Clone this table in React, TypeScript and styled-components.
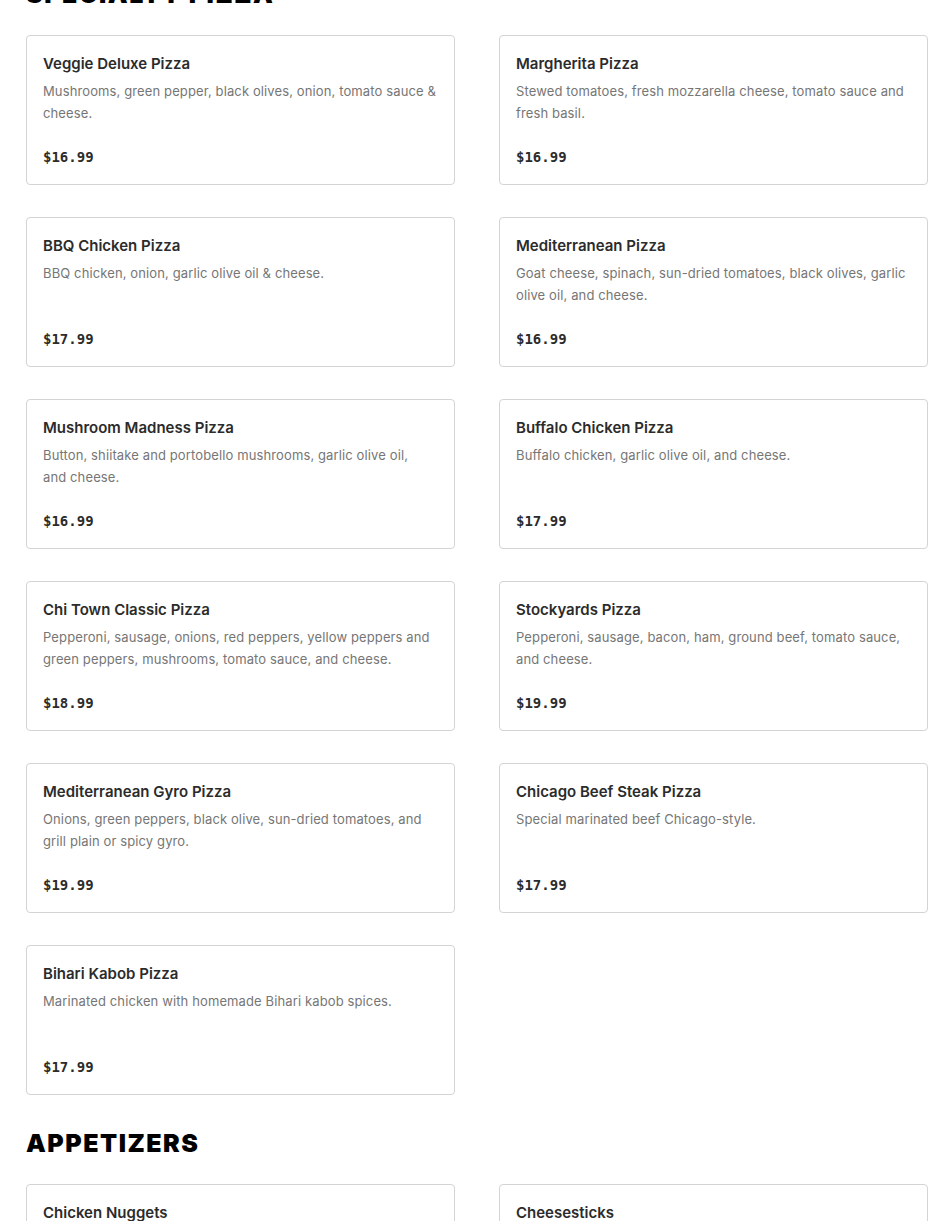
import styled, { createGlobalStyle } from "styled-components";

interface IMenuItem {
  name: string;
  description: string;
  price: string;
}

interface IMenuSection {
  title: string;
  items: IMenuItem[];
}

const sections: IMenuSection[] = [
  {
    title: "Specialty Pizza",
    items: [
      {
        name: "Veggie Deluxe Pizza",
        description:
          "Mushrooms, green pepper, black olives, onion, tomato sauce & cheese.",
        price: "$16.99",
      },
      {
        name: "Margherita Pizza",
        description:
          "Stewed tomatoes, fresh mozzarella cheese, tomato sauce and fresh basil.",
        price: "$16.99",
      },
      {
        name: "BBQ Chicken Pizza",
        description: "BBQ chicken, onion, garlic olive oil & cheese.",
        price: "$17.99",
      },
      {
        name: "Mediterranean Pizza",
        description:
          "Goat cheese, spinach, sun-dried tomatoes, black olives, garlic olive oil, and cheese.",
        price: "$16.99",
      },
      {
        name: "Mushroom Madness Pizza",
        // keep "and cheese." together so it wraps like the original
        description:
          "Button, shiitake and portobello mushrooms, garlic olive oil, and\u00a0cheese.",
        price: "$16.99",
      },
      {
        name: "Buffalo Chicken Pizza",
        description: "Buffalo chicken, garlic olive oil, and cheese.",
        price: "$17.99",
      },
      {
        name: "Chi Town Classic Pizza",
        description:
          "Pepperoni, sausage, onions, red peppers, yellow peppers and green peppers, mushrooms, tomato sauce, and cheese.",
        price: "$18.99",
      },
      {
        name: "Stockyards Pizza",
        description:
          "Pepperoni, sausage, bacon, ham, ground beef, tomato sauce, and cheese.",
        price: "$19.99",
      },
      {
        name: "Mediterranean Gyro Pizza",
        description:
          "Onions, green peppers, black olive, sun-dried tomatoes, and grill plain or spicy gyro.",
        price: "$19.99",
      },
      {
        name: "Chicago Beef Steak Pizza",
        description: "Special marinated beef Chicago-style.",
        price: "$17.99",
      },
      {
        name: "Bihari Kabob Pizza",
        description: "Marinated chicken with homemade Bihari kabob spices.",
        price: "$17.99",
      },
    ],
  },
  {
    title: "Appetizers",
    items: [
      {
        name: "Chicken Nuggets",
        description: "Crispy breaded chicken nuggets served with a dipping sauce.",
        price: "$7.99",
      },
      {
        name: "Cheesesticks",
        description: "Breadsticks topped with melted mozzarella cheese.",
        price: "$8.99",
      },
    ],
  },
];

const GlobalStyle = createGlobalStyle`
  * {
    box-sizing: border-box;
  }
  body {
    margin: 0;
    background: #ffffff;
    font-family: Inter, "Noto Sans", sans-serif;
    -webkit-font-smoothing: antialiased;
  }
`;

// page is shown scrolled down a little, the first heading sits under the top edge
const StyledPage = styled.main`
  margin-top: -24px;
  padding: 0 22px 40px 26px;
  overflow: hidden;
`;

const StyledSection = styled.section`
  & + & {
    margin-top: 30px;
  }
`;

const StyledHeading = styled.h2`
  margin: 0 0 23px;
  font-family: Inter, "Liberation Sans", sans-serif;
  font-size: 25px;
  line-height: 36px;
  font-weight: 900;
  letter-spacing: 1.5px;
  text-transform: uppercase;
  color: #000000;
`;

const StyledGrid = styled.div`
  display: grid;
  grid-template-columns: repeat(2, 429px);
  column-gap: 44px;
  row-gap: 32px;
`;

const StyledCard = styled.article`
  display: flex;
  flex-direction: column;
  height: 150px;
  padding: 16px 16px 17px;
  border: 1px solid #d4d4d4;
  border-radius: 4px;
  background: #ffffff;
  .item-name {
    margin: 0 0 4px;
    font-size: 15px;
    line-height: 24px;
    font-weight: 600;
    color: #2b2b2b;
  }
  .item-desc {
    margin: 0;
    min-height: 44px;
    font-size: 13px;
    line-height: 22px;
    letter-spacing: 0.12px;
    color: #767676;
  }
  .item-price {
    margin-top: auto;
    font-family: "DejaVu Sans Mono", "Liberation Mono", monospace;
    font-size: 14px;
    line-height: 20px;
    font-weight: 700;
    color: #2b2b2b;
  }
`;

const MenuCard = (props: IMenuItem) => {
  return (
    <StyledCard>
      <h3 className="item-name">{props.name}</h3>
      <p className="item-desc">{props.description}</p>
      <span className="item-price">{props.price}</span>
    </StyledCard>
  );
};

const App = () => {
  return (
    <>
      <GlobalStyle />
      <StyledPage>
        {sections.map((section) => (
          <StyledSection key={section.title}>
            <StyledHeading>{section.title}</StyledHeading>
            <StyledGrid>
              {section.items.map((item) => (
                <MenuCard key={item.name} {...item} />
              ))}
            </StyledGrid>
          </StyledSection>
        ))}
      </StyledPage>
    </>
  );
};

export default App;
